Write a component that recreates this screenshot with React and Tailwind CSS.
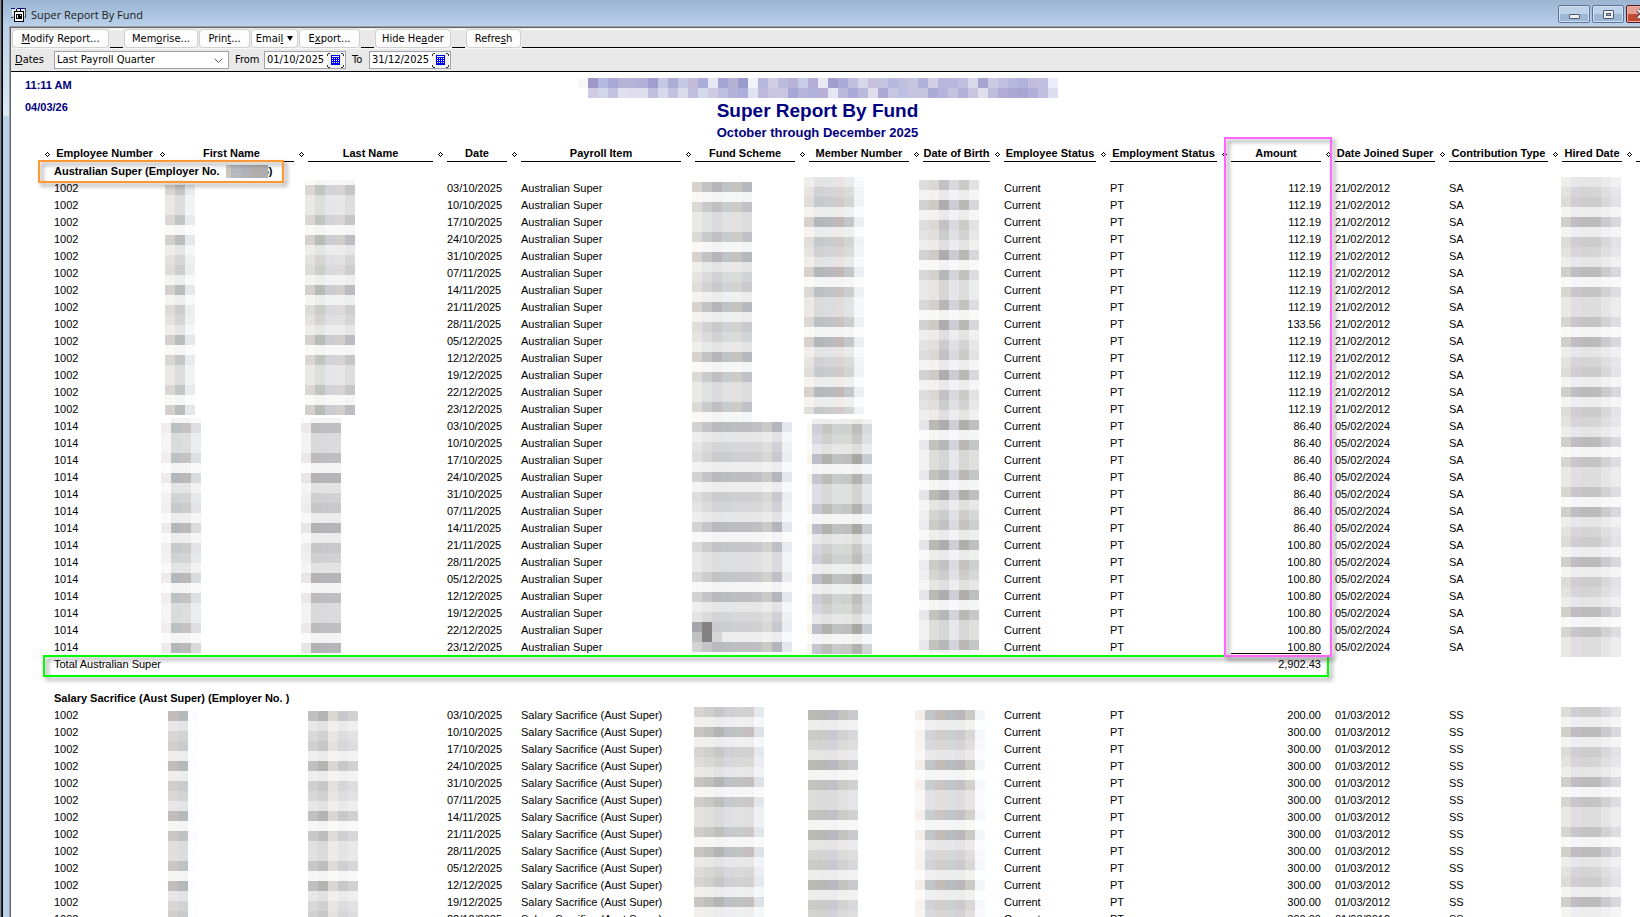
import React from "react";

const COLUMNS = [
  { label: "Employee Number", col: "w-[115px]" },
  { label: "First Name", col: "w-[139px]" },
  { label: "Last Name", col: "w-[139px]" },
  { label: "Date", col: "w-[74px]" },
  { label: "Payroll Item", col: "w-[174px]" },
  { label: "Fund Scheme", col: "w-[114px]" },
  { label: "Member Number", col: "w-[114px]" },
  { label: "Date of Birth", col: "w-[81px]" },
  { label: "Employee Status", col: "w-[106px]" },
  { label: "Employment Status", col: "w-[121px]" },
  { label: "Amount", col: "w-[104px]" },
  { label: "Date Joined Super", col: "w-[114px]" },
  { label: "Contribution Type", col: "w-[113px]" },
  { label: "Hired Date", col: "w-[74px]" },
];

const DATES = [
  "03/10/2025", "10/10/2025", "17/10/2025", "24/10/2025", "31/10/2025",
  "07/11/2025", "14/11/2025", "21/11/2025", "28/11/2025", "05/12/2025",
  "12/12/2025", "19/12/2025", "22/12/2025", "23/12/2025",
];

const superRows = [
  ...DATES.map((date, i) => ({
    no: "1002", date, item: "Australian Super",
    amount: i === 8 ? "133.56" : "112.19", joined: "21/02/2012", type: "SA",
  })),
  ...DATES.map((date, i) => ({
    no: "1014", date, item: "Australian Super",
    amount: i < 7 ? "86.40" : "100.80", joined: "05/02/2024", type: "SA",
  })),
];

const sacrificeRows = DATES.slice(0, 13).map((date, i) => ({
  no: "1002", date, item: "Salary Sacrifice (Aust Super)",
  amount: i === 0 ? "200.00" : "300.00", joined: "01/03/2012", type: "SS",
}));

/* Pixelated redaction blocks. `x`, `y` and `end` are in report coordinates,
   `phase` is the top of the 10px cell grid, `cols` the darkest tone per column. */
const REDACTIONS = [
  { x: 154, y: 108, end: 343, phase: 103, cols: "d3d0ce b9bdbc e5e7ea" },
  { x: 294, y: 108, end: 343, phase: 103, cols: "d3d0ce b9bcb4 cbccd2 d2cecc bbbdc2" },
  { x: 681, y: 110, end: 350, phase: 110, cols: "d6d3cf c1c3c2 b7b5b9 c0c3c6 c4c3bd b5b8bd" },
  { x: 793, y: 105, end: 342, phase: 105, cols: "d6d3cf b3b7b7 b7b9bc c2b8b8 c4c7c6 ebeef2" },
  { x: 908, y: 108, end: 348, phase: 108, cols: "d2d2d2 cecac6 aeacae cccdd4 b9b8b4 d7d8db" },
  { x: 1550, y: 105, end: 585, phase: 105, cols: "d0d0ca c0bcc4 bababa bbbbbb cbcbcd d8d9de" },
  { x: 150, y: 346, end: 581, phase: 341, cols: "eeeae9 b2b8bb bbbab9 d9dadc" },
  { x: 290, y: 346, end: 581, phase: 341, cols: "e7e6e5 b2b2b4 b5b5b8 b6b6b8" },
  { x: 681, y: 350, end: 580, phase: 350, cols: "d3d3d3 c5c5c7 bababd babcbf bebec0 bebdc1 c0c0c4 cccac6 b5b5be e5e7ee" },
  { x: 796, y: 347, end: 582, phase: 342, first: 5, cols: "f6f5ea bebdca b1b1ae bfc1c2 bebfba a7a7a4 c8cdd2" },
  { x: 908, y: 348, end: 581, phase: 348, cols: "e5e4e7 babab4 aeacae cdced6 b0aeaa bcc0c0" },
  { x: 157, y: 639, end: 850, phase: 639, cols: "c2bdbc b6b9ba fafcff" },
  { x: 297, y: 639, end: 850, phase: 639, cols: "c0c0c0 b4b4b4 dad6d2 c8c8cb d0d1d3" },
  { x: 683, y: 635, end: 850, phase: 635, cols: "c9c5c1 bfbfbc b3b5b5 c0bfc5 c0c3c4 c4bfbe dee2e6" },
  { x: 797, y: 638, end: 850, phase: 638, cols: "babab4 b7b7b5 b7b8c1 c4c3c0 c9cacc" },
  { x: 904, y: 638, end: 850, phase: 638, cols: "f3eeea c0c5c8 c3bcb8 b8bec0 b8b8ba cbc9c6 f3f6f9" },
  { x: 1550, y: 635, end: 850, phase: 635, cols: "d0d0ca c0bcc4 bababa bbbbbb cbcbcd d8d9de" },
];

/* Share of a 10px band that is covered by the 8px tall glyphs of the 17px rows. */
function coverage(top) {
  let covered = 0;
  for (let y = top; y < top + 10; y++) {
    const offset = (y - 112 + 1700) % 17;
    if (offset < 8) covered++;
  }
  return Math.min(1, 0.06 + 0.94 * Math.pow(covered / 8, 1.1));
}

function redactionCells({ x, y, end, phase, cols, first = 10 }) {
  const tones = cols.split(" ");
  const cells = [];
  for (let top = phase; top < end; top += 10) {
    const from = Math.max(top, y);
    const to = Math.min(top + 10, end);
    let left = x;
    tones.forEach((tone, i) => {
      const w = i === 0 ? first : 10;
      cells.push({ x: left, y: from, w, h: to - from, tone, o: coverage(top) });
      left += w;
    });
  }
  return cells;
}

const CELLS = REDACTIONS.flatMap(redactionCells);

function Redactions() {
  return (
    <svg className="pointer-events-none absolute left-0 top-0 h-[845px] w-[1629px]" shapeRendering="crispEdges" aria-hidden="true">
      {CELLS.map((c, i) => (
        <rect key={i} x={c.x} y={c.y} width={c.w} height={c.h} fill={"#" + c.tone} opacity={c.o} />
      ))}
      <rect x="681" y="550" width="10" height="10" fill="#a5a6aa" />
      <rect x="681" y="560" width="10" height="10" fill="#c0c1c1" />
      <rect x="691" y="550" width="10" height="20" fill="#838181" />
      <rect x="701" y="560" width="10" height="10" fill="#d5d7d6" />
    </svg>
  );
}

const COMPANY = [
  "f7f6f8 9e98c8 b2b8df a9a8d4 b7b3d6 b6b1d8 b3aed6 a19ecf c5c7e3 aeabd5 c6c7e2 c2bbda a9add8 e7e8f3 a5a5d3 b6b2d7 9a9bcd f1f4fb b8b8dc d0cde5 bcbbde b6b2d8 c9cce7 b4aed6 e9e8f4 a19dcf aaabd7 c0bfdf d8d7ea c8c1de c5c5e1 b6b8df bfbfdf c8c5e1 b0b1db d2cfe6 b8b6da b8b6da c0bfdf dad9ec a7a4d4 cccbe4 c1c0e0 b7b6dc b1b2dc c1bddd c1bedf ebeef8",
  "ffffff cfc9e1 d3d5eb c3c2e1 e1e0ef e0deee dfdeee c0bfdf d9d9ec c4c1e0 dbdaeb c1bddd d4daee cfcbe2 bcbfe1 b5b2d9 afaedb e0e2f1 bfbadb c9c5e1 c8c6e2 a8a8d7 b7b5da b0b2db b8b0d6 e7e7f3 bcb9dc aaabd8 bbb9dd dfdcec aea9d2 c4c6e3 bcc0e2 c7c3e0 c7c4e0 aaacd8 b6b4da c5c2e0 b4b2d9 c9c5e1 dfdfee bfbddd b1abd5 aca8d4 aaa6d4 b2aed8 bfbedf dcdef0",
];

function CompanyName() {
  return (
    <svg className="h-5 w-[480px]" viewBox="0 0 480 20" shapeRendering="crispEdges" role="img" aria-label="Company name">
      {COMPANY.map((row, r) =>
        row.split(" ").map((tone, c) => (
          <rect key={r + "-" + c} x={c * 10} y={r * 10} width="10" height="10" fill={"#" + tone} />
        ))
      )}
    </svg>
  );
}

function Diamond() {
  return (
    <svg className="mx-auto mt-[6px] h-[5px] w-[5px]" viewBox="0 0 5 5" shapeRendering="crispEdges" aria-hidden="true">
      <path d="M2 0h1v1h-1zM1 1h1v1h-1zM3 1h1v1h-1zM0 2h1v1h-1zM4 2h1v1h-1zM1 3h1v1h-1zM3 3h1v1h-1zM2 4h1v1h-1z" fill="#000" />
    </svg>
  );
}

function AppIcon() {
  return (
    <svg className="mt-1 h-4 w-4" viewBox="0 0 16 16" shapeRendering="crispEdges" aria-hidden="true">
      <path d="M1 2h13v7H1z" fill="#dfe6ef" />
      <path d="M0 1h4v1H0zM6 1h8v1H6z" fill="#10108a" />
      <path d="M0 10h2v1H0zM14 1h1v10h-1z" fill="#444" />
      <path d="M3 4h10v11H3z" fill="#000" />
      <path d="M4 5h8v9H4z" fill="#fff" />
      <path d="M5 2h1v3H5zM9 2h1v3H9z" fill="#000" />
      <path d="M5 7h6v5H5z" fill="#000" />
      <path d="M6 8h1v3H6zM9 8h1v1H9z" fill="#fff" />
    </svg>
  );
}

function CalendarIcon() {
  return (
    <svg className="h-[15px] w-[17px]" viewBox="0 0 17 15" shapeRendering="crispEdges" aria-hidden="true">
      <path d="M0 0h17v15H0z" fill="#f2f2f2" />
      <path d="M1 0h2v1H1zM0 1h1v2H0zM14 0h2v1h-2zM16 1h1v2h-1zM0 12h1v2H0zM1 14h2v1H1zM16 12h1v2h-1zM14 14h2v1h-2z" fill="#333" />
      <path d="M4 2h9v10H4z" fill="#0000f0" />
      <path d="M5 3h7v1H5zM5 5h1v1H5zM7 5h1v1H7zM9 5h1v1H9zM11 5h1v1h-1zM5 7h1v1H5zM7 7h1v1H7zM9 7h1v1H9zM11 7h1v1h-1zM5 9h1v1H5zM7 9h1v1H7zM9 9h1v1H9zM11 9h1v1h-1z" fill="#fff" />
    </svg>
  );
}

function ToolButton({ width, children }) {
  return (
    <button
      type="button"
      className={
        "flex h-[19px] items-center justify-center whitespace-nowrap rounded-[4px] border border-[#d0d0d0] bg-[#fdfdfd] leading-4 " + width
      }
    >
      {children}
    </button>
  );
}

function ToolGap({ grow }) {
  return <span className={"h-[19px] border-b border-t border-b-black border-t-white " + (grow ? "flex-1" : "w-[13px]")} />;
}

function DateField({ id, value }) {
  return (
    <span className="flex h-[18px] w-[82px] items-center border border-[#a0a0a8] bg-white pl-[2px]">
      <input id={id} type="text" defaultValue={value} className="w-[60px] min-w-0 bg-transparent leading-4 outline-none" />
      <button type="button" aria-label="Choose date">
        <CalendarIcon />
      </button>
    </span>
  );
}

function CaptionButton({ label, danger, children }) {
  return (
    <button
      type="button"
      aria-label={label}
      className={
        "flex h-[18px] w-8 items-center justify-center rounded-[2px] border " +
        (danger
          ? "border-[#5a1820] bg-linear-to-b from-[#e2a093] from-50% to-[#c04a32] to-50% shadow-[inset_0_0_0_1px_#e8b0a8]"
          : "border-[#5f7595] bg-linear-to-b from-[#bdd2e9] from-50% to-[#9db8d4] to-50% shadow-[inset_0_0_0_1px_#cfe0f2]")
      }
    >
      {children}
    </button>
  );
}

function DataRow({ row, last }) {
  return (
    <tr className="h-[17px]">
      <td />
      <td>{row.no}</td>
      <td />
      <td />
      <td>{row.date}</td>
      <td>{row.item}</td>
      <td />
      <td />
      <td />
      <td>Current</td>
      <td>PT</td>
      <td className="pr-[14px] text-right align-top">
        {last ? <span className="block h-[15px] border-b border-black">{row.amount}</span> : row.amount}
      </td>
      <td>{row.joined}</td>
      <td>{row.type}</td>
      <td />
      <td />
    </tr>
  );
}

export default function App() {
  return (
    <div className="flex h-screen overflow-hidden bg-white font-['Liberation_Sans',Arial,sans-serif] text-[11px] text-black">
      <div className="w-[3px] shrink-0 border-l border-r border-l-[#8a8f96] border-r-black bg-[#30343a]" />
      <div className="flex min-w-0 flex-1 flex-col bg-[#b9d1ea] bg-[linear-gradient(#b9d1ea_26px,#dfeaf6_115px,#b9d1ea_117px)]">
        <header className="flex h-[26px] shrink-0 items-center bg-linear-to-b from-[#9bb4d1] to-[#b9d1ea] pl-2">
          <AppIcon />
          <h1 className="ml-1 pt-1 font-['Open_Sans','Noto_Sans',sans-serif] text-[11px] leading-5 text-[#1a1a1a]">Super Report By Fund</h1>
          <div className="-mr-[18px] ml-auto flex gap-[2px] pt-[2px]">
            <CaptionButton label="Minimise">
              <span className="mt-1 h-[5px] w-[11px] rounded-[1px] border border-[#4c5870] bg-[#f0f0f0]" />
            </CaptionButton>
            <CaptionButton label="Maximise">
              <span className="flex h-[9px] w-[11px] items-center justify-center rounded-[1px] border border-[#4c5870] bg-[#f0f0f0]">
                <span className="h-[3px] w-[5px] border border-[#4c5870] bg-[#9db8d4]" />
              </span>
            </CaptionButton>
            <CaptionButton label="Close" danger>
              <svg className="h-[10px] w-3" viewBox="0 0 12 10" aria-hidden="true">
                <path d="M2 1l8 8M10 1l-8 8" stroke="#4c3848" strokeWidth="4" />
                <path d="M2 1l8 8M10 1l-8 8" stroke="#f4f4f4" strokeWidth="2" />
              </svg>
            </CaptionButton>
          </div>
        </header>

        <div className="ml-[6px] flex min-h-0 flex-1 flex-col border-l border-t border-[#a0a0a0]">
          <div className="flex min-h-0 flex-1 flex-col border-l border-t border-[#606468] bg-[#e9e9e9]">
            <div
              role="toolbar"
              className="flex h-5 shrink-0 items-end gap-px pl-px font-['DejaVu_Sans_Condensed','Noto_Sans',sans-serif] text-[11px]"
            >
              <ToolButton width="w-[97px]"><span><u>M</u>odify Report...</span></ToolButton>
              <ToolGap />
              <ToolButton width="w-[74px]"><span>Mem<u>o</u>rise...</span></ToolButton>
              <ToolButton width="w-[51px]"><span>Prin<u>t</u>...</span></ToolButton>
              <ToolButton width="w-[47px]">
                <span>Emai<u>l</u></span>
                <svg className="ml-1 h-[5px] w-[6px]" viewBox="0 0 6 5" aria-hidden="true"><path d="M0 0h6l-3 5z" fill="#000" /></svg>
              </ToolButton>
              <ToolButton width="w-[61px]"><span>E<u>x</u>port...</span></ToolButton>
              <ToolGap />
              <ToolButton width="w-[76px]"><span>Hide He<u>a</u>der</span></ToolButton>
              <ToolGap />
              <ToolButton width="w-[55px]"><span>Refre<u>s</u>h</span></ToolButton>
              <ToolGap grow />
            </div>

            <div className="flex h-6 shrink-0 items-center border-b border-black pl-1 pt-px font-['DejaVu_Sans_Condensed','Noto_Sans',sans-serif] text-[11px] shadow-[inset_0_1px_0_#f8f8f8]">
              <label htmlFor="range" className="w-[39px]"><u>D</u>ates</label>
              <span className="relative flex">
                <select id="range" className="h-[18px] w-[175px] appearance-none border border-[#a0a0a8] bg-white pl-[2px] leading-4">
                  <option>Last Payroll Quarter</option>
                </select>
                <svg className="pointer-events-none absolute right-[6px] top-[7px] h-[6px] w-[9px]" viewBox="0 0 9 6" aria-hidden="true">
                  <path d="M.5 .5l4 4 4-4" fill="none" stroke="#606060" />
                </svg>
              </span>
              <label htmlFor="from" className="w-[35px] pl-[6px]">From</label>
              <DateField id="from" value="01/10/2025" />
              <label htmlFor="to" className="w-[23px] pl-[6px]">To</label>
              <DateField id="to" value="31/12/2025" />
            </div>

            <main className="relative min-h-0 flex-1 overflow-hidden bg-white">
              <div className="grid h-[74px] grid-cols-[1fr_auto_1fr] pr-4 font-bold text-[#000080]">
                <div className="pl-[14px] pt-[2px] leading-[22px]">
                  <p>11:11 AM</p>
                  <p>04/03/26</p>
                </div>
                <div className="flex flex-col items-center pt-[6px]">
                  <CompanyName />
                  <h2 className="text-[19px] leading-[26px]">Super Report By Fund</h2>
                  <p className="text-[13px] leading-[18px]">October through December 2025</p>
                </div>
              </div>

              <div className="pl-[29px]">
                <table className="w-full table-fixed border-collapse whitespace-nowrap leading-[17px]">
                  <colgroup>
                    <col className="w-[14px]" />
                    {COLUMNS.map((c) => <col key={c.label} className={c.col} />)}
                    <col />
                  </colgroup>
                  <thead>
                    <tr className="h-[17px]">
                      <th className="p-0 align-top"><Diamond /></th>
                      {COLUMNS.map((c) => (
                        <th key={c.label} scope="col" className="p-0 align-top">
                          <span className="flex items-start">
                            <span className="h-4 flex-1 border-b border-black leading-[15px]">{c.label}</span>
                            <span className="w-[14px]"><Diamond /></span>
                          </span>
                        </th>
                      ))}
                      <th className="p-0 align-top"><span className="block h-4 border-b border-black" /></th>
                    </tr>
                  </thead>
                  <tbody>
                    <tr className="h-[17px]">
                      <td />
                      <th colSpan={15} scope="rowgroup" className="text-left">
                        <span className="flex items-center">
                          Australian Super (Employer No.
                          <svg className="relative ml-[6px] h-[13px] w-[42px]" viewBox="0 0 42 13" shapeRendering="crispEdges" aria-hidden="true">
                            <path d="M0 0h5v13H0z" fill="#cdc6bd" />
                            <path d="M5 0h10v13H5z" fill="#b5b8be" />
                            <path d="M15 0h10v13H15z" fill="#b1b2b8" />
                            <path d="M25 0h10v13H25z" fill="#b2aeae" />
                            <path d="M35 0h7v13H35z" fill="#b0adb0" />
                          </svg>
                          <span className="-ml-[5px]">5)</span>
                        </span>
                      </th>
                    </tr>
                    {superRows.map((row, i) => <DataRow key={i} row={row} last={i === superRows.length - 1} />)}
                    <tr className="h-[17px]">
                      <td />
                      <td colSpan={10}>Total Australian Super</td>
                      <td className="pr-[14px] text-right">2,902.43</td>
                      <td colSpan={4} />
                    </tr>
                    <tr className="h-[17px]"><td colSpan={16} /></tr>
                    <tr className="h-[17px]">
                      <td />
                      <th colSpan={15} scope="rowgroup" className="text-left">Salary Sacrifice (Aust Super) (Employer No. )</th>
                    </tr>
                    {sacrificeRows.map((row, i) => <DataRow key={i} row={row} />)}
                  </tbody>
                </table>
              </div>

              <Redactions />
              <div className="pointer-events-none absolute left-[27px] top-[88px] h-[23px] w-[246px] border-2 border-[#ff9933] drop-shadow-[3px_3px_2px_rgba(0,0,0,0.45)]" />
              <div className="pointer-events-none absolute left-[32px] top-[583px] h-[22px] w-[1286px] border-2 border-[#00ff00] drop-shadow-[3px_3px_2px_rgba(0,0,0,0.45)]" />
              <div className="pointer-events-none absolute left-[1213px] top-[65px] h-[520px] w-[108px] border-2 border-[#ff66ff] drop-shadow-[3px_3px_2px_rgba(0,0,0,0.45)]" />
            </main>
          </div>
        </div>
      </div>
    </div>
  );
}
